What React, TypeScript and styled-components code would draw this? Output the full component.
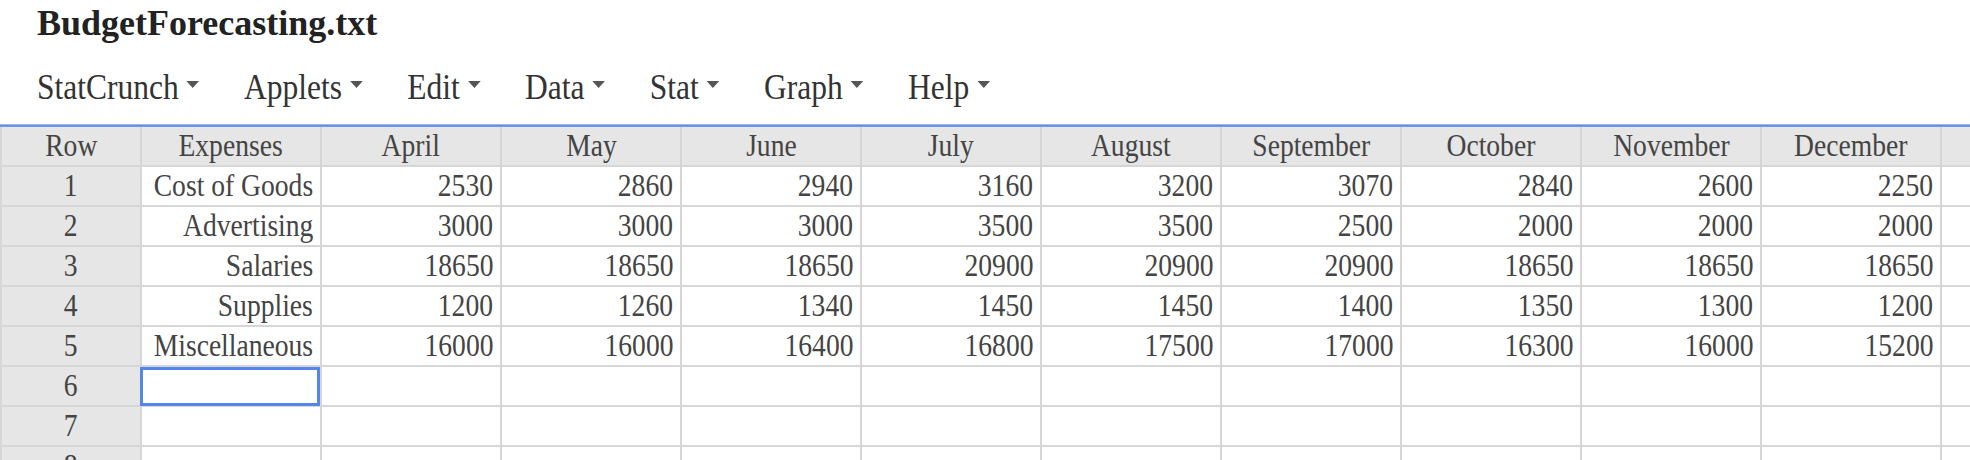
import React from "react";
import styled, { createGlobalStyle } from "styled-components";

const Global = createGlobalStyle`
  html, body { margin: 0; padding: 0; background: #fff; }
  body { font-family: "Liberation Serif", "Times New Roman", serif; overflow: hidden; }
`;

const Page = styled.div`
  width: 1970px;
  height: 460px;
  overflow: hidden;
  display: flex;
  flex-direction: column;
  & > * { flex: none; }
`;

const Title = styled.h1`
  margin: 0;
  padding: 3px 0 0 37px;
  height: 47px;
  box-sizing: content-box;
  font-size: 36px;
  font-weight: bold;
  color: #222;
  line-height: 40px;
`;

const MenuBar = styled.nav`
  height: 74px;
  padding-left: 37px;
  display: flex;
  align-items: center;
`;

const MenuList = styled.div`
  display: flex;
  align-items: center;
  gap: 49.5px;
  transform: scaleX(0.9);
  transform-origin: left center;
  margin-top: 2px;
`;

const MenuItem = styled.div`
  display: flex;
  align-items: center;
  gap: 9px;
  font-size: 35px;
  color: #333;
`;

const Caret = styled.span`
  width: 0;
  height: 0;
  border-left: 7px solid transparent;
  border-right: 7px solid transparent;
  border-top: 7px solid #555;
  margin-top: -8px;
`;

const Rule = styled.div`
  height: 3px;
  background: linear-gradient(#b4cbf0, #5b8ae4 55%, #7fa3ea);
`;

const Grid = styled.div`
  display: grid;
  grid-template-columns: 142px repeat(11, 180px);
  grid-auto-rows: 40px;
  font-size: 31px;
  color: #444;
`;

const Cell = styled.div<{ $head?: boolean; $align?: "left" | "center" | "right"; $first?: boolean }>`
  position: relative;
  box-sizing: border-box;
  border-right: 2px solid #d6d6d6;
  border-bottom: 2px solid #d6d6d6;
  border-left: ${(p) => (p.$first ? "2px solid #d6d6d6" : "none")};
  background: ${(p) => (p.$head ? "#e6e6e6" : "#fff")};
  display: flex;
  align-items: center;
  justify-content: ${(p) =>
    p.$align === "center" ? "center" : p.$align === "left" ? "flex-start" : "flex-end"};
  padding: 0 7px 1px;
  white-space: nowrap;
`;

const CellText = styled.span<{ $align?: "left" | "center" | "right" }>`
  display: inline-block;
  line-height: 36px;
  transform: scaleX(0.89);
  transform-origin: ${(p) => (p.$align === "center" ? "center" : "right")} center;
`;

const Selected = styled.div`
  position: absolute;
  left: -2px;
  top: 0;
  right: 0;
  bottom: -1px;
  border: 3px solid #5186ec;
  box-sizing: border-box;
  z-index: 2;
`;

const months = ["April", "May", "June", "July", "August", "September", "October", "November", "December"];
const data: [string, number[]][] = [
  ["Cost of Goods", [2530, 2860, 2940, 3160, 3200, 3070, 2840, 2600, 2250]],
  ["Advertising", [3000, 3000, 3000, 3500, 3500, 2500, 2000, 2000, 2000]],
  ["Salaries", [18650, 18650, 18650, 20900, 20900, 20900, 18650, 18650, 18650]],
  ["Supplies", [1200, 1260, 1340, 1450, 1450, 1400, 1350, 1300, 1200]],
  ["Miscellaneous", [16000, 16000, 16400, 16800, 17500, 17000, 16300, 16000, 15200]],
];

const menus = ["StatCrunch", "Applets", "Edit", "Data", "Stat", "Graph", "Help"];

export default function App() {
  const rows: [string, (number | string)[]][] = data.map((d) => [d[0], d[1]]);
  for (let i = 0; i < 3; i++) rows.push(["", Array(9).fill("")]);
  return (
    <Page>
      <Global />
      <Title>BudgetForecasting.txt</Title>
      <MenuBar>
        <MenuList>
          {menus.map((m) => (
            <MenuItem key={m}>
              {m}
              <Caret />
            </MenuItem>
          ))}
        </MenuList>
      </MenuBar>
      <Rule />
      <Grid>
        <Cell $head $first $align="center">
          <CellText $align="center">Row</CellText>
        </Cell>
        {["Expenses", ...months].map((m) => (
          <Cell key={m} $head $align="center">
            <CellText $align="center">{m}</CellText>
          </Cell>
        ))}
        <Cell $head />
        {rows.map(([label, vals], i) => (
          <React.Fragment key={i}>
            <Cell $head $first $align="center">
              <CellText $align="center">{i + 1}</CellText>
            </Cell>
            <Cell>
              <CellText>{label}</CellText>
              {i === 5 && <Selected />}
            </Cell>
            {vals.map((v, j) => (
              <Cell key={j}>
                <CellText>{v}</CellText>
              </Cell>
            ))}
            <Cell />
          </React.Fragment>
        ))}
      </Grid>
    </Page>
  );
}
